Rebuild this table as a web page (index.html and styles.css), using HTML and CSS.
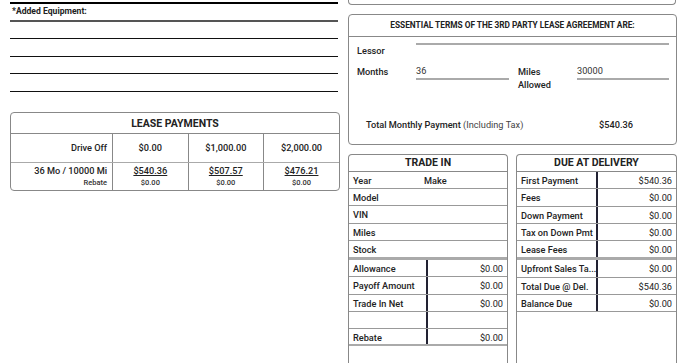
FILE: index.html
```html
<!DOCTYPE html>
<html>
<head>
<meta charset="utf-8">
<link rel="stylesheet" href="styles.css">
</head>
<body>
<div class="page">
  <div class="left">
    <div class="equip">
      <div class="equip-title">*Added Equipment:</div>
      <div class="equip-lines">
        <div class="line"></div>
        <div class="line"></div>
        <div class="line"></div>
        <div class="line"></div>
      </div>
    </div>
    <div class="box lease">
      <div class="box-head">LEASE PAYMENTS</div>
      <table class="lease-table">
        <tr class="drive">
          <td class="lbl">Drive Off</td>
          <td>$0.00</td>
          <td>$1,000.00</td>
          <td>$2,000.00</td>
        </tr>
        <tr class="pay">
          <td class="lbl"><div class="main">36 Mo / 10000 Mi</div><div class="sub">Rebate</div></td>
          <td><div class="main u">$540.36</div><div class="sub">$0.00</div></td>
          <td><div class="main u">$507.57</div><div class="sub">$0.00</div></td>
          <td><div class="main u">$476.21</div><div class="sub">$0.00</div></td>
        </tr>
      </table>
    </div>
  </div>
  <div class="right">
    <div class="prev"></div>
    <div class="box terms">
      <div class="box-head small">ESSENTIAL TERMS OF THE 3RD PARTY LEASE AGREEMENT ARE:</div>
      <div class="terms-body">
        <div class="lessor-row">
          <div class="t-lbl lessor-lbl">Lessor</div>
          <div class="field lessor-field"></div>
        </div>
        <div class="months-row">
          <div class="t-lbl">Months</div>
          <div class="field">36</div>
          <div class="t-lbl miles-lbl">Miles Allowed</div>
          <div class="field">30000</div>
        </div>
        <div class="total-row">
          <div class="total-lbl"><b>Total Monthly Payment</b> (Including Tax)</div>
          <div class="total-val">$540.36</div>
        </div>
      </div>
    </div>
    <div class="pair">
      <div class="box card trade">
        <div class="box-head card-head">TRADE IN</div>
        <div class="rows">
          <div class="row"><span class="c1">Year</span><span>Make</span></div>
          <div class="row">Model</div>
          <div class="row">VIN</div>
          <div class="row">Miles</div>
          <div class="row">Stock</div>
        </div>
        <div class="kv">
          <div class="kv-row"><span class="k">Allowance</span><span class="v">$0.00</span></div>
          <div class="kv-row"><span class="k">Payoff Amount</span><span class="v">$0.00</span></div>
          <div class="kv-row"><span class="k">Trade In Net</span><span class="v">$0.00</span></div>
          <div class="kv-row"><span class="k"></span><span class="v"></span></div>
          <div class="kv-row"><span class="k">Rebate</span><span class="v">$0.00</span></div>
        </div>
      </div>
      <div class="box card due">
        <div class="box-head card-head">DUE AT DELIVERY</div>
        <div class="kv first">
          <div class="kv-row"><span class="k">First Payment</span><span class="v">$540.36</span></div>
          <div class="kv-row"><span class="k">Fees</span><span class="v">$0.00</span></div>
          <div class="kv-row"><span class="k">Down Payment</span><span class="v">$0.00</span></div>
          <div class="kv-row"><span class="k">Tax on Down Pmt</span><span class="v">$0.00</span></div>
          <div class="kv-row"><span class="k">Lease Fees</span><span class="v">$0.00</span></div>
        </div>
        <div class="kv second">
          <div class="kv-row"><span class="k">Upfront Sales Ta...</span><span class="v">$0.00</span></div>
          <div class="kv-row"><span class="k">Total Due @ Del.</span><span class="v">$540.36</span></div>
          <div class="kv-row"><span class="k">Balance Due</span><span class="v">$0.00</span></div>
        </div>
      </div>
    </div>
  </div>
</div>
</body>
</html>
```

FILE: styles.css
```css
* { box-sizing: border-box; }
html, body { margin: 0; padding: 0; background: #fff; }
body {
  font-family: Roboto, "Liberation Sans", Arial, sans-serif;
  color: #222;
  font-size: 9px;
  height: 363px;
  overflow: hidden;
}
.page {
  display: flex;
  gap: 10px;
  padding: 0 13px 0 10px;
  align-items: flex-start;
}
.left { width: 328px; flex: none; }
.right { width: 329px; flex: none; }

/* added equipment */
.equip {
  margin-top: 2px;
  border-top: 2px solid #000;
}
.equip-title {
  font-weight: 700;
  font-size: 8.6px;
  height: 18px;
  line-height: 14px;
  padding-left: 2px;
  border-bottom: 2px solid #555;
}
.equip-lines {
  display: flex;
  flex-direction: column;
}
.line {
  height: 18px;
  border-bottom: 1px solid #111;
}
.line:first-child { height: 17px; }
.line:nth-child(3) { height: 17px; }

/* generic box */
.box {
  border: 1px solid #888;
  border-radius: 4px;
  background: #fff;
}
.box-head {
  text-align: center;
  font-weight: 700;
  font-size: 10.5px;
  color: #222;
  border-bottom: 1px solid #888;
}

/* lease */
.lease { margin-top: 20px; width: 330px; }
.lease .box-head { height: 21px; line-height: 21px; }
.lease-table {
  width: 100%;
  border-collapse: collapse;
  table-layout: fixed;
}
.lease-table td {
  text-align: center;
  padding: 0;
  font-size: 9.2px;
  font-weight: 500;
  border-left: 1px solid #888;
  width: 75px;
}
.lease-table td.lbl {
  text-align: right;
  padding-right: 5px;
  border-left: none;
  width: 101px;
}
.lease-table .drive td {
  height: 28px;
  border-bottom: 1px solid #aaa;
}
.lease-table .pay td { height: 28px; vertical-align: top; padding-top: 2px; }
.main { font-size: 9.2px; line-height: 12px; }
.main.u { text-decoration: underline; }
.sub { font-size: 7.5px; line-height: 12px; font-weight: 500; color: #333; }

/* right column */
.prev {
  height: 5px;
  width: 328px;
  border: 1px solid #888;
  border-top: none;
  border-radius: 0 0 4px 4px;
}
.terms { margin-top: 9px; height: 131px; }
.box-head.small {
  font-size: 8.3px;
  height: 22px;
  line-height: 21px;
}
.terms-body {
  padding: 0 7px 0 8px;
}
.lessor-row {
  display: grid;
  grid-template-columns: 59px 1fr;
}
.lessor-lbl { padding-top: 7px; line-height: 12px; }
.field {
  border-bottom: 2px solid #aaa;
  line-height: 12px;
  height: 14px;
}
.lessor-field { height: 8px; }
.t-lbl { font-size: 9.2px; font-weight: 500; line-height: 13px; }
.months-row {
  display: grid;
  grid-template-columns: 59px 93px 68px 1fr;
  margin-top: 8px;
  align-items: start;
}
.months-row .field { font-size: 9.2px; color: #333; height: 15px; }
.miles-lbl { padding-left: 9px; padding-right: 14px; }
.total-row {
  display: flex;
  margin-top: 28px;
  padding-left: 9px;
  font-size: 9.2px;
}
.total-lbl { width: 233px; font-weight: 400; color: #444; }
.total-lbl b { font-weight: 500; color: #222; }
.total-val { font-weight: 500; }

/* trade / due */
.pair {
  display: flex;
  gap: 8px;
  margin-top: 9px;
}
.card {
  height: 209px;
  border-bottom: none;
  border-radius: 4px 4px 0 0;
}
.trade { width: 160px; }
.due { width: 161px; }
.card-head {
  height: 17px;
  line-height: 16px;
  font-size: 10.5px;
}
.row {
  height: 17.2px;
  line-height: 17px;
  border-bottom: 1px solid #999;
  padding-left: 4px;
  font-weight: 500;
  font-size: 9.2px;
  display: flex;
}
.row .c1 { width: 71px; }
.trade .rows .row:last-child { border-bottom: 2px solid #aaa; height: 18.2px; }
.kv-row {
  display: flex;
  height: 17.3px;
  line-height: 17px;
  border-bottom: 1px solid #999;
  font-weight: 500;
  font-size: 9.2px;
}
.kv-row .k {
  width: 79px;
  padding-left: 4px;
  border-right: 2px solid #223;
  white-space: nowrap;
  overflow: hidden;
}
.kv-row .v {
  flex: 1;
  text-align: right;
  padding-right: 4px;
  font-weight: 400;
}
.trade .kv { border-top: 1px solid #aaa; }
.trade .kv .kv-row:last-child { border-bottom: 2px solid #aaa; height: 17px; }
.due .kv-row .k { width: 81px; }
.due .kv.first .kv-row:last-child { border-bottom: 2px solid #aaa; height: 18.3px; }
.due .kv.second { border-top: 1px solid #aaa; }
```
